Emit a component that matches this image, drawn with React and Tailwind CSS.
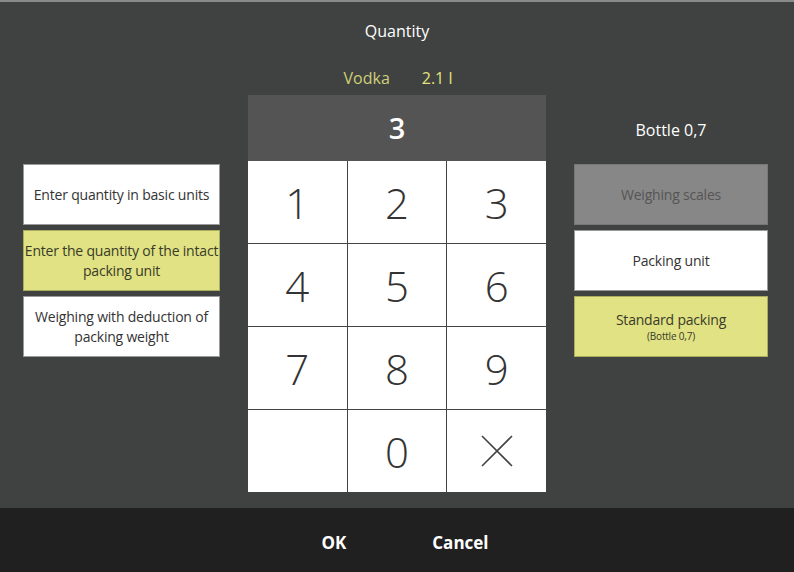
import React from "react";

const font = { fontFamily: '"Open Sans", "Noto Sans", sans-serif' };

function SideBtn({ children, variant = "white" }) {
  const cls =
    variant === "yellow"
      ? "bg-[#e0e283] border-[#a9ab5e] text-[#3a3a2a]"
      : variant === "grey"
      ? "bg-[#878787] border-[#777] text-[#555]"
      : "bg-white border-[#9a9a9a] text-[#333]";
  return (
    <div
      className={`h-[61px] border flex flex-col items-center justify-center text-center text-[14px] leading-[20px] tracking-[-0.2px] ${cls}`}
    >
      {children}
    </div>
  );
}

export default function App() {
  const keys = ["1", "2", "3", "4", "5", "6", "7", "8", "9", "", "0", "x"];
  return (
    <div className="w-[794px] h-[572px] bg-[#404241] flex flex-col overflow-hidden" style={font}>
      <div className="h-[2px] bg-[#8a8a8a]" />
      <div className="flex-1 flex flex-col">
        <div className="h-[57px] pt-[17px] text-center text-white text-[16px] leading-[24px]">
          Quantity
        </div>
        <div className="h-[36px] flex justify-center items-start pt-[7px] gap-[32px] text-[16px] leading-[24px] pl-[2px]">
          <span className="text-[#cfcf78]">Vodka</span>
          <span className="text-[#e2e27c]">2.1 l</span>
        </div>
        <div className="flex">
          <div className="ml-[23px] w-[197px] mt-[69px] flex flex-col gap-[5px]">
            <SideBtn>Enter quantity in basic units</SideBtn>
            <SideBtn variant="yellow">
              <span className="whitespace-nowrap">Enter the quantity of the intact</span>
              <span>packing unit</span>
            </SideBtn>
            <SideBtn>
              <span>Weighing with deduction of</span>
              <span>packing weight</span>
            </SideBtn>
          </div>
          <div className="ml-[28px] w-[298px] flex flex-col">
            <div className="h-[66px] bg-[#545454] flex items-center justify-center text-white text-[29px] font-semibold">
              3
            </div>
            <div className="grid grid-cols-3 gap-px bg-[#444]">
              {keys.map((k, i) => (
                <div
                  key={i}
                  className="h-[82px] bg-white flex items-center justify-center text-[42px] font-light text-[#333]"
                >
                  {k === "x" ? (
                    <svg width="32" height="32" viewBox="0 0 32 32">
                      <path d="M1 1 L31 31 M31 1 L1 31" stroke="#444" strokeWidth="1.6" fill="none" />
                    </svg>
                  ) : (
                    k
                  )}
                </div>
              ))}
            </div>
          </div>
          <div className="ml-[28px] w-[194px] flex flex-col">
            <div className="h-[69px] flex items-center justify-center text-white text-[16px]">
              Bottle 0,7
            </div>
            <div className="flex flex-col gap-[5px]">
              <SideBtn variant="grey">Weighing scales</SideBtn>
              <SideBtn>Packing unit</SideBtn>
              <SideBtn variant="yellow">
                <span className="leading-[18px]">Standard packing</span>
                <span className="text-[10px] leading-[14px]">(Bottle 0,7)</span>
              </SideBtn>
            </div>
          </div>
        </div>
      </div>
      <div className="h-[64px] bg-[#202020] flex items-center justify-center gap-[86px] pt-[6px] text-white font-bold text-[17px] pl-[16px]">
        <span>OK</span>
        <span>Cancel</span>
      </div>
    </div>
  );
}
